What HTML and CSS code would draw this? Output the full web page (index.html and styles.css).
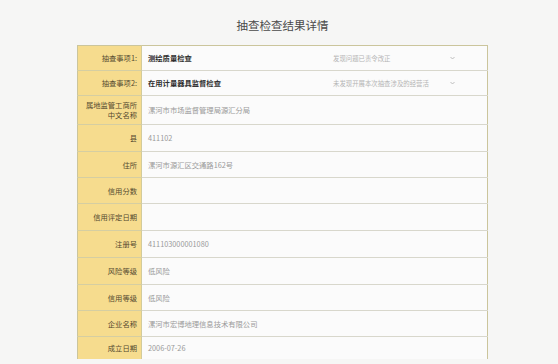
FILE: index.html
```html
<!DOCTYPE html>
<html lang="zh">
<head>
<meta charset="utf-8">
<link rel="stylesheet" href="styles.css">
</head>
<body>
<div class="page">
  <h1 class="title">抽查检查结果详情</h1>
  <table class="detail">
    <tr class="r-sel">
      <th>抽查事项1:</th>
      <td>
        <div class="sel-row">
          <span class="item">测绘质量检查</span>
          <div class="select"><span>发现问题已责令改正</span><svg class="chev" width="5" height="4" viewBox="0 0 5 4"><path d="M0.5 1 L2.5 3 L4.5 1" fill="none" stroke="#b0b0b0" stroke-width="0.8"/></svg></div>
        </div>
      </td>
    </tr>
    <tr class="r-sel">
      <th>抽查事项2:</th>
      <td>
        <div class="sel-row">
          <span class="item">在用计量器具监督检查</span>
          <div class="select"><span>未发现开展本次抽查涉及的经营活</span><svg class="chev" width="5" height="4" viewBox="0 0 5 4"><path d="M0.5 1 L2.5 3 L4.5 1" fill="none" stroke="#b0b0b0" stroke-width="0.8"/></svg></div>
        </div>
      </td>
    </tr>
    <tr class="r-tall">
      <th>属地监管工商所<br>中文名称</th>
      <td>漯河市市场监督管理局源汇分局</td>
    </tr>
    <tr class="r-27"><th>县</th><td>411102</td></tr>
    <tr><th>住所</th><td>漯河市源汇区交通路162号</td></tr>
    <tr><th>信用分数</th><td></td></tr>
    <tr class="r-27"><th>信用评定日期</th><td></td></tr>
    <tr class="r-27"><th>注册号</th><td>411103000001080</td></tr>
    <tr class="r-27"><th>风险等级</th><td>低风险</td></tr>
    <tr><th>信用等级</th><td>低风险</td></tr>
    <tr><th>企业名称</th><td>漯河市宏博地理信息技术有限公司</td></tr>
    <tr class="r-last"><th>成立日期</th><td>2006-07-26</td></tr>
  </table>
</div>
</body>
</html>
```

FILE: styles.css
```css
html, body {
  margin: 0;
  padding: 0;
  background: #f6f6f5;
}
body {
  font-family: "Noto Sans CJK SC", "Noto Sans", sans-serif;
  height: 364px;
  overflow: hidden;
}
.page {
  width: 411px;
  margin: 0 0 0 77px;
}
.title {
  margin: 0;
  height: 45px;
  line-height: 50px;
  text-align: center;
  font-size: 11.5px;
  font-weight: normal;
  color: #4a4a4a;
}
.detail {
  width: 411px;
  border-collapse: collapse;
  table-layout: fixed;
  border: 1px solid #cbc59c;
  border-bottom: none;
}
.detail tr {
  height: 26px;
}
.detail tr.r-sel { height: 25px; }
.detail tr.r-tall { height: 29px; }
.detail tr.r-27 { height: 27px; }
.detail tr.r-last { height: 22px; }
.detail th {
  width: 64px;
  box-sizing: border-box;
  background: #f6dc8e;
  border-right: 1px solid #d3cb9a;
  border-bottom: 1px solid #d5cea2;
  text-align: right;
  padding: 0 4px 0 0;
  font-size: 7.3px;
  line-height: 10px;
  font-weight: normal;
  color: #54492f;
  vertical-align: middle;
}
.detail td {
  background: #fbfbfb;
  border-bottom: 1px solid #d8d7cc;
  padding: 0 0 0 6px;
  font-size: 7.3px;
  color: #9a9a9a;
  vertical-align: middle;
}
.r-last th, .r-last td { border-bottom: none; }
.sel-row {
  display: flex;
  align-items: center;
}
.item {
  font-weight: bold;
  color: #2e2e2e;
  flex: 1;
}
.select {
  width: 124px;
  margin-right: 30px;
  display: flex;
  align-items: center;
  justify-content: space-between;
  font-size: 6.4px;
  color: #b4b4b4;
  padding-left: 3px;
}
.chev {
  display: block;
  margin-right: 2px;
}
```
